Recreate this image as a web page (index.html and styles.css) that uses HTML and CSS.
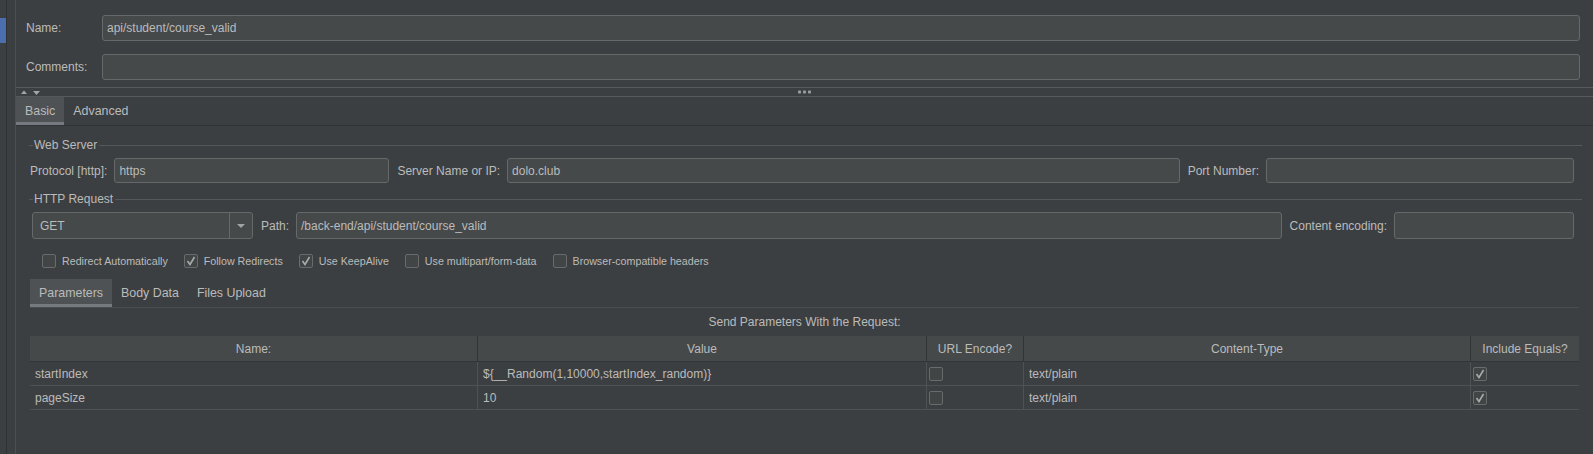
FILE: index.html
```html
<!DOCTYPE html>
<html lang="en">
<head>
<meta charset="utf-8">
<title>HTTP Request</title>
<link rel="stylesheet" href="styles.css">
</head>
<body>
<div class="app">
  <div class="rail"><div class="rail-sel"></div></div>
  <div class="strip"></div>
  <div class="main">
    <div class="head">
      <div class="frow"><span class="flbl">Name:</span><div class="input">api/student/course_valid</div></div>
      <div class="frow"><span class="flbl">Comments:</span><div class="input"></div></div>
    </div>
    <div class="splitter">
      <span class="arrows">
        <svg width="20" height="5" viewBox="0 0 20 5"><path d="M0 4 L3 0.5 L6 4 Z" fill="#a3a6a9"/><path d="M12 1 L19 1 L15.5 5 Z" fill="#a3a6a9"/></svg>
      </span>
      <span class="dots">
        <svg width="13" height="4" viewBox="0 0 13 4"><rect x="0" y="0.5" width="3" height="3" rx="0.8" fill="#9a9c9e"/><rect x="5" y="0.5" width="3" height="3" rx="0.8" fill="#9a9c9e"/><rect x="10" y="0.5" width="3" height="3" rx="0.8" fill="#9a9c9e"/></svg>
      </span>
      <span></span>
    </div>
    <div class="tabs top-tabs">
      <div class="tab sel">Basic</div>
      <div class="tab">Advanced</div>
    </div>
    <div class="basic">
      <div class="gtitle"><span>Web Server</span></div>
      <div class="row srow">
        <span class="rlbl first">Protocol [http]:</span>
        <div class="input w-proto">https</div>
        <span class="rlbl">Server Name or IP:</span>
        <div class="input grow">dolo.club</div>
        <span class="rlbl">Port Number:</span>
        <div class="input w-port"></div>
      </div>
      <div class="gtitle t2"><span>HTTP Request</span></div>
      <div class="row qrow">
        <div class="combo">
          <span class="combo-val">GET</span>
          <span class="combo-btn"><svg width="8" height="4" viewBox="0 0 8 4"><path d="M0 0 L8 0 L4 4 Z" fill="#a0a4a8"/></svg></span>
        </div>
        <span class="rlbl">Path:</span>
        <div class="input grow">/back-end/api/student/course_valid</div>
        <span class="rlbl">Content encoding:</span>
        <div class="input w-enc"></div>
      </div>
      <div class="checks">
        <label class="chk"><span class="cb"></span>Redirect Automatically</label>
        <label class="chk"><span class="cb on"><svg width="12" height="12" viewBox="0 0 12 12"><path d="M2.5 6 L5 9.5 L9.5 2" fill="none" stroke="#a9abad" stroke-width="1.6"/></svg></span>Follow Redirects</label>
        <label class="chk"><span class="cb on"><svg width="12" height="12" viewBox="0 0 12 12"><path d="M2.5 6 L5 9.5 L9.5 2" fill="none" stroke="#a9abad" stroke-width="1.6"/></svg></span>Use KeepAlive</label>
        <label class="chk"><span class="cb"></span>Use multipart/form-data</label>
        <label class="chk"><span class="cb"></span>Browser-compatible headers</label>
      </div>
      <div class="tabs param-tabs">
        <div class="tab sel">Parameters</div>
        <div class="tab">Body Data</div>
        <div class="tab">Files Upload</div>
      </div>
      <div class="send">Send Parameters With the Request:</div>
      <table class="params">
        <colgroup>
          <col class="c-name"><col class="c-value"><col class="c-url"><col class="c-ct"><col class="c-eq">
        </colgroup>
        <thead>
          <tr><th>Name:</th><th>Value</th><th>URL Encode?</th><th>Content-Type</th><th>Include Equals?</th></tr>
        </thead>
        <tbody>
          <tr>
            <td>startIndex</td>
            <td>${__Random(1,10000,startIndex_random)}</td>
            <td class="cbcell"><span class="cb"></span></td>
            <td>text/plain</td>
            <td class="cbcell"><span class="cb on"><svg width="12" height="12" viewBox="0 0 12 12"><path d="M2.5 6 L5 9.5 L9.5 2" fill="none" stroke="#a9abad" stroke-width="1.6"/></svg></span></td>
          </tr>
          <tr>
            <td>pageSize</td>
            <td>10</td>
            <td class="cbcell"><span class="cb"></span></td>
            <td>text/plain</td>
            <td class="cbcell"><span class="cb on"><svg width="12" height="12" viewBox="0 0 12 12"><path d="M2.5 6 L5 9.5 L9.5 2" fill="none" stroke="#a9abad" stroke-width="1.6"/></svg></span></td>
          </tr>
        </tbody>
      </table>
    </div>
  </div>
</div>
</body>
</html>
```

FILE: styles.css
```css
* { box-sizing: border-box; }
html, body { margin: 0; padding: 0; }
body {
  width: 1593px;
  height: 454px;
  overflow: hidden;
  background: #3c3f41;
  color: #bbbbbb;
  font-family: "Liberation Sans", Arial, sans-serif;
  font-size: 12px;
}
.app { display: flex; height: 454px; }
.rail { width: 7px; border-right: 1px solid #2f3133; padding-top: 18px; flex: none; }
.rail-sel { width: 6px; height: 25px; background: #4b6eaf; }
.strip { width: 9px; border-right: 1px solid #4b4e50; flex: none; }
.main { flex: 1; min-width: 0; display: flex; flex-direction: column; }

.head { padding: 15px 13px 7px 10px; display: flex; flex-direction: column; gap: 13px; }
.frow { display: flex; align-items: center; height: 26px; }
.flbl { width: 76px; flex: none; }
.input {
  flex: 1;
  min-width: 0;
  height: 26px;
  background: #45494a;
  border: 1px solid #666869;
  border-radius: 3px;
  padding: 0 4px;
  display: flex;
  align-items: center;
  white-space: nowrap;
}

.splitter {
  height: 10px;
  border-top: 1px solid #56595b;
  border-bottom: 1px solid #56595b;
  display: grid;
  grid-template-columns: 1fr auto 1fr;
  align-items: center;
}
.arrows { padding-left: 5px; display: flex; align-items: center; }
.arrows svg, .dots svg { display: block; }
.dots { display: flex; }

.tabs { display: flex; height: 29px; border-bottom: 1px solid #303234; }
.tab { height: 28px; padding: 0 9px; display: flex; align-items: center; white-space: nowrap; font-size: 12.4px; }
.tab.sel { background: #4e5254; box-shadow: inset 0 -3px 0 #747a80; }

.basic { padding: 0 11px 0 13px; display: flex; flex-direction: column; }
.gtitle { height: 14px; margin-top: 12px; display: flex; align-items: center; }
.gtitle.t2 { margin-top: 9px; }
.gtitle::before { content: ""; width: 4px; height: 1px; background: #55585a; margin-right: 1px; }
.gtitle::after { content: ""; flex: 1; height: 1px; background: #55585a; margin-left: 2px; }

.row { display: flex; align-items: center; margin-right: 8px; }
.srow { margin-top: 6px; height: 25px; }
.srow .input { height: 25px; }
.qrow { margin-top: 6px; height: 27px; }
.qrow .input { height: 27px; }
.rlbl { margin: 0 7px 0 8px; white-space: nowrap; flex: none; }
.rlbl.first { margin-left: 1px; }
.w-proto { flex: none; width: 275px; }
.w-port { flex: none; width: 308px; }
.w-enc { flex: none; width: 180px; }
.grow { flex: 1; }

.combo {
  margin-left: 3px;
  width: 221px;
  height: 27px;
  flex: none;
  background: #45494a;
  border: 1px solid #666869;
  border-radius: 3px;
  display: flex;
  align-items: stretch;
}
.combo-val { flex: 1; padding-left: 7px; display: flex; align-items: center; }
.combo-btn { width: 23px; border-left: 1px solid #666869; display: flex; align-items: center; justify-content: center; padding-right: 1px; }
.combo-btn svg { display: block; }

.checks { margin-top: 12px; height: 20px; display: flex; align-items: center; gap: 16px; padding-left: 13px; font-size: 10.7px; }
.chk { display: flex; align-items: center; gap: 6px; white-space: nowrap; }
.cb {
  width: 14px;
  height: 14px;
  flex: none;
  border: 1px solid #686a6c;
  border-radius: 2px;
  background: #414546;
  display: flex;
  align-items: center;
  justify-content: center;
}
.cb svg { display: block; }

.param-tabs { margin: 8px 3px 0 1px; border-bottom-color: #4a4d4f; }

.send { margin: 7px 3px 0 1px; height: 14px; line-height: 14px; text-align: center; }

.params {
  margin: 7px 3px 0 1px;
  width: 1549px;
  table-layout: fixed;
  border-collapse: separate;
  border-spacing: 0;
}
.c-name { width: 447px; }
.c-value { width: 449px; }
.c-url { width: 97px; }
.c-ct { width: 447px; }
.c-eq { width: 109px; }
.params th {
  height: 26px;
  padding: 0 4px;
  font-weight: normal;
  text-align: center;
  background: #45494a;
  border-bottom: 1px solid #323537;
  white-space: nowrap;
}
.params th + th { border-left: 1px solid #323537; }
.params td {
  height: 24px;
  padding: 0 5px;
  border-bottom: 1px solid #4f5254;
  white-space: nowrap;
  vertical-align: middle;
}
.params td + td { border-left: 1px solid #4f5254; }
.params td.cbcell { padding: 0 2px; }
```
